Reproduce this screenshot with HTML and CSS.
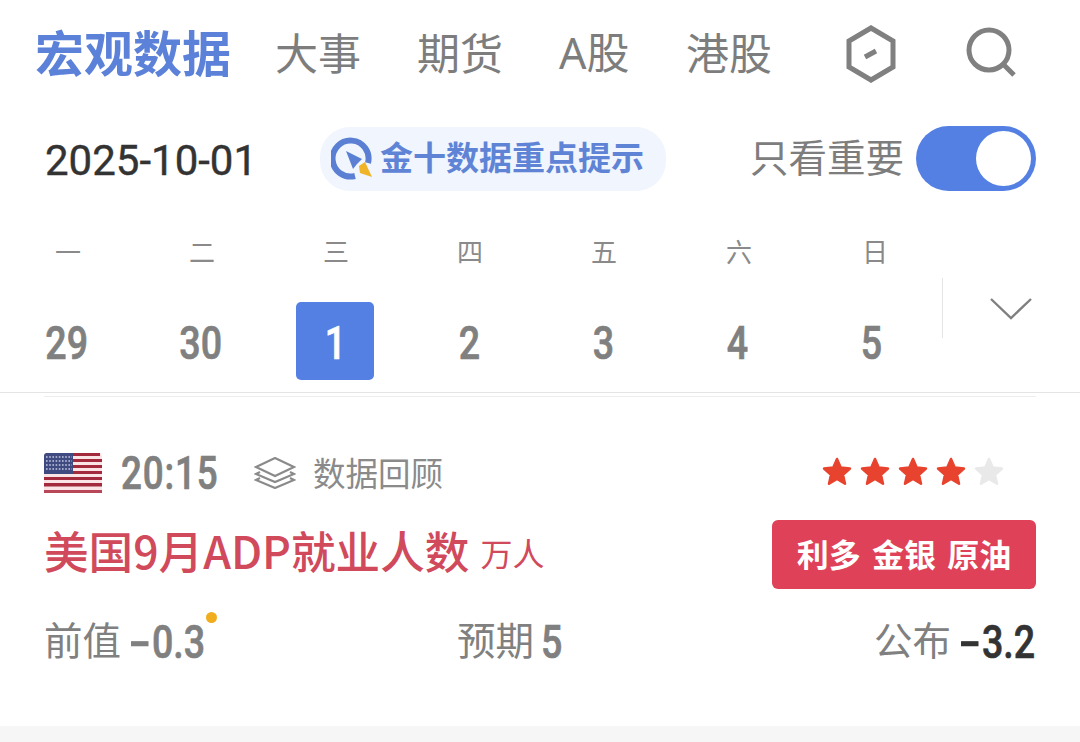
FILE: index.html
```html
<!DOCTYPE html>
<html lang="zh-CN">
<head>
  <meta charset="UTF-8" />
  <meta name="viewport" content="width=device-width, initial-scale=1.0"/>
  <title>宏观数据</title>
  <link rel="stylesheet" href="styles.css">
</head>
<body>

<div class="page">
  <div class="nav">
    <span class="nav-title">宏观数据</span>
    <span class="nav-item nav-dashi">大事</span>
    <span class="nav-item nav-qihuo">期货</span>
    <span class="nav-item nav-ag">A股</span>
    <span class="nav-item nav-gg">港股</span>
    <svg class="nav-hex" width="56" height="60" viewBox="0 0 56 60">
      <path d="M28 4 L50 17 V43 L28 56 L6 43 V17 Z" fill="none" stroke="#808080" stroke-width="5"/>
      <path d="M22 33 L33 27" fill="none" stroke="#808080" stroke-width="5"/>
    </svg>
    <svg class="nav-search" width="52" height="52" viewBox="0 0 52 52">
      <circle cx="24" cy="24" r="20" fill="none" stroke="#808080" stroke-width="5"/>
      <path d="M38 38 L49 49" fill="none" stroke="#808080" stroke-width="5"/>
    </svg>
  </div>

  <div class="date-row">
    <span class="date">2025-10-01</span>
    <div class="hint">
      <svg width="44" height="44" viewBox="0 0 44 44">
        <path d="M37 26 A18 18 0 1 0 24 39" fill="none" stroke="#5b80d3" stroke-width="6"/>
        <path d="M15 14 L31 22 L26 27 L22 32 Z" fill="#5b80d3"/>
        <path d="M28 29 L34 25 L41 40 L29 36 Z" fill="#f0b429"/>
      </svg>
      <span class="hint-text">金十数据重点提示</span>
    </div>
    <div class="only">
      <span class="only-text">只看重要</span>
      <div class="switch"><div class="knob"></div></div>
    </div>
  </div>

  <div class="cal">
    <div class="cal-col"><span class="wd">一</span><span class="day"><b class="num">29</b></span></div>
    <div class="cal-col"><span class="wd">二</span><span class="day"><b class="num">30</b></span></div>
    <div class="cal-col"><span class="wd">三</span><span class="day active"><b class="num">1</b></span></div>
    <div class="cal-col"><span class="wd">四</span><span class="day"><b class="num">2</b></span></div>
    <div class="cal-col"><span class="wd">五</span><span class="day"><b class="num">3</b></span></div>
    <div class="cal-col"><span class="wd">六</span><span class="day"><b class="num">4</b></span></div>
    <div class="cal-col"><span class="wd">日</span><span class="day"><b class="num">5</b></span></div>
    <div class="cal-more">
      <svg width="44" height="24" viewBox="0 0 44 24">
        <path d="M2 1 L22 20 L42 1" fill="none" stroke="#808080" stroke-width="2.4"/>
      </svg>
    </div>
  </div>

  <div class="rule"></div>
  <div class="rule-short"></div>

  <div class="item">
    <div class="item-top">
      <svg class="flag" width="58" height="40" viewBox="0 0 58 40">
        <rect width="58" height="40" rx="3" fill="#fbe4e6"/>
        <rect x="2" y="0" width="54" height="3" fill="#a32a3c"/>
        <rect y="6" width="58" height="3" fill="#a32a3c"/>
        <rect y="12" width="58" height="3" fill="#a32a3c"/>
        <rect y="18" width="58" height="3" fill="#a32a3c"/>
        <rect y="24" width="58" height="3" fill="#a32a3c"/>
        <rect y="30" width="58" height="3.500" fill="#a32a3c"/>
        <rect y="37" width="58" height="3" fill="#b8475a"/>
        <path d="M3 0 H29 V21 H0 V3 A3 3 0 0 1 3 0 Z" fill="#3f4a80"/>
        <path d="M2 4 H28 M2 8 H28 M2 12 H28 M2 16 H28" stroke="#c5cbe6" stroke-width="1.600" stroke-dasharray="1.600 1.600"/>
      </svg>
      <b class="num time">20:15</b>
      <svg class="layers" width="42" height="32" viewBox="0 0 42 32">
        <path d="M21 1 L40 10 L21 19 L2 10 Z" fill="none" stroke="#8a8a8a" stroke-width="2.200"/>
        <path d="M6 15 L2 17 L21 25 L40 17 L36 15" fill="none" stroke="#8a8a8a" stroke-width="2.200"/>
        <path d="M6 21 L2 23 L21 31 L40 23 L36 21" fill="none" stroke="#8a8a8a" stroke-width="2.200"/>
      </svg>
      <span class="review">数据回顾</span>
      <div class="stars">
        <svg width="192" height="32" viewBox="0 0 192 32">
          <path id="s" d="M15 3 L18.700 11.600 L28 12.500 L21 18.700 L23 27.800 L15 23 L7 27.800 L9 18.700 L2 12.500 L11.300 11.600 Z" fill="#e8432e" stroke="#e8432e" stroke-width="2.500" stroke-linejoin="round"/>
          <use href="#s" x="38"/>
          <use href="#s" x="76"/>
          <use href="#s" x="114"/>
          <path transform="translate(152 0)" d="M15 3 L18.700 11.600 L28 12.500 L21 18.700 L23 27.800 L15 23 L7 27.800 L9 18.700 L2 12.500 L11.300 11.600 Z" fill="#e9e9e9" stroke="#e9e9e9" stroke-width="2.500" stroke-linejoin="round"/>
        </svg>
      </div>
    </div>
    <div class="item-mid">
      <span class="item-name">美国9月ADP就业人数</span>
      <span class="item-unit">万人</span>
      <span class="tag">利多 金银 原油</span>
    </div>
    <div class="item-bottom">
      <div class="val val-prev"><span class="val-label">前值</span><b class="num val-num"><span class="minus">-</span>0.3</b><i class="dot"></i></div>
      <div class="val val-exp"><span class="val-label">预期</span><b class="num val-num">5</b></div>
      <div class="val val-pub"><span class="val-label">公布</span><b class="num val-num strong"><span class="minus">-</span>3.2</b></div>
    </div>
  </div>

  <div class="band"></div>
</div>

</body>
</html>
```
FILE: styles.css
```css
* {
  box-sizing: border-box;
}

html, body {
  margin: 0;
  padding: 0;
}

body {
  background-color: #ffffff;
  font-family: "Noto Sans CJK SC", "Noto Sans", sans-serif;
  color: #808080;
}

.page {
  width: 1080px;
  height: 742px;
  overflow: hidden;
  display: flex;
  flex-direction: column;
}

/* condensed digits, no narrow font is installed */
.num {
  display: inline-block;
  font-family: Roboto, sans-serif;
  font-weight: 500;
  font-size: 47px;
  white-space: nowrap;
  color: #808080;
  -webkit-text-stroke: 0.7px currentColor;
  transform: scaleX(0.8);
}

/* top tabs */
.nav {
  display: flex;
  align-items: center;
  height: 108px;
  padding-left: 35px;
  padding-bottom: 7px;
}

.nav-title {
  font-size: 49px;
  font-weight: 700;
  color: #5b82d8;
  width: 240px;
}

.nav-item {
  font-size: 43px;
  color: #7d7d7d;
}

.nav-dashi { width: 142px; }
.nav-qihuo { width: 142px; }
.nav-ag { width: 127px; font-family: "Noto Sans", "Noto Sans CJK SC", sans-serif; }
.nav-gg { flex: 0 0 157px; }

.nav-hex { margin: 7px 66px 0 0; }
.nav-search { margin-top: 3px; }

/* date row */
.date-row {
  display: flex;
  align-items: center;
  height: 104px;
  padding: 0 44px 0 45px;
}

.date {
  font-family: Roboto, sans-serif;
  font-size: 42px;
  -webkit-text-stroke: 0.4px #333333;
  color: #333333;
  width: 275px;
}

.hint {
  display: flex;
  align-items: center;
  gap: 5px;
  width: 346px;
  height: 64px;
  margin-bottom: 2px;
  padding-left: 11px;
  background-color: #f0f5fe;
  border-radius: 30px;
}

.hint-text {
  font-size: 33px;
  font-weight: 700;
  color: #5f84d6;
  margin-bottom: 6px;
}

.only {
  margin-left: auto;
  margin-bottom: 4px;
  display: flex;
  align-items: center;
  gap: 12px;
}

.only-text {
  font-size: 38.500px;
  color: #7d7d7d;
  margin-bottom: 6px;
}

.switch {
  width: 120px;
  height: 65px;
  padding: 5px;
  border-radius: 33px;
  background-color: #5480e3;
  display: flex;
  justify-content: flex-end;
}

.knob {
  width: 55px;
  height: 55px;
  border-radius: 50%;
  background-color: #ffffff;
}

/* week strip */
.cal {
  display: flex;
  height: 180px;
}

.cal-col {
  width: 134px;
  display: flex;
  flex-direction: column;
  align-items: center;
}

.wd {
  font-size: 26px;
  color: #8a8a8a;
  line-height: 36px;
  margin: 21px 0 0 2px;
}

.cal-col:nth-child(6) .wd { margin-left: 4px; }
.cal-col:nth-child(7) .wd { margin-left: 8px; }

.day {
  width: 78px;
  height: 78px;
  margin-top: 33px;
  padding-top: 2px;
  border-radius: 5px;
  display: flex;
  align-items: center;
  justify-content: center;
}

.day.active {
  background-color: #5480e3;
}

.day.active .num {
  color: #ffffff;
}

.cal-more {
  margin-left: 4px;
  flex: 1;
  height: 60px;
  margin-top: 66px;
  border-left: 1px solid #e4e4e4;
  padding: 20px 0 0 46px;
}

.rule {
  height: 1px;
  background-color: #e4e4e4;
}

.rule-short {
  height: 1px;
  margin: 3px 44px 0;
  background-color: #eeeeee;
}

/* data item */
.item {
  padding: 0 44px;
  flex: 1;
}

.item-top {
  display: flex;
  align-items: center;
  height: 58px;
  margin-top: 47px;
}

.time {
  width: 96px;
  margin-left: 19px;
  font-size: 46px;
  letter-spacing: 1px;
  transform-origin: left center;
}

.layers {
  margin-left: 37px;
}

.review {
  font-size: 32.500px;
  color: #8a8a8a;
  margin: 0 0 3px 17px;
}

.stars {
  margin-left: auto;
  margin-right: 22px;
  margin-bottom: 2px;
  display: flex;
}

.item-mid {
  display: flex;
  align-items: center;
  height: 70px;
  margin-top: 17px;
}

.item-name {
  font-size: 44.600px;
  font-weight: 500;
  color: #d04a5c;
  margin-bottom: 10px;
}

.item-unit {
  font-size: 32px;
  color: #d04a5c;
  margin: 0 0 4px 11px;
}

.tag {
  margin-left: auto;
  width: 264px;
  height: 69px;
  line-height: 66px;
  text-align: center;
  font-size: 32px;
  font-weight: 700;
  word-spacing: 4px;
  color: #ffffff;
  background-color: #df4258;
  border-radius: 6px;
}

.item-bottom {
  display: flex;
  align-items: center;
  height: 60px;
  margin-top: 19px;
}

.val {
  position: relative;
  display: flex;
  align-items: center;
  gap: 7px;
}

.val-prev { width: 413px; }
.val-exp { flex: 1; }
.val-pub { margin-right: 4px; }

.val-label {
  font-size: 38.500px;
  color: #808080;
}

.val-num {
  width: 74px;
  margin-top: 6px;
  transform-origin: left center;
}

.val-num.strong {
  color: #333333;
}

.minus {
  display: inline-block;
  margin: 0 7px;
  transform: scaleX(1.700);
}

.dot {
  position: absolute;
  left: 162px;
  top: 4px;
  width: 11px;
  height: 11px;
  border-radius: 50%;
  background-color: #f0ad1e;
}

.band {
  height: 16px;
  background-color: #f6f6f6;
}
```
